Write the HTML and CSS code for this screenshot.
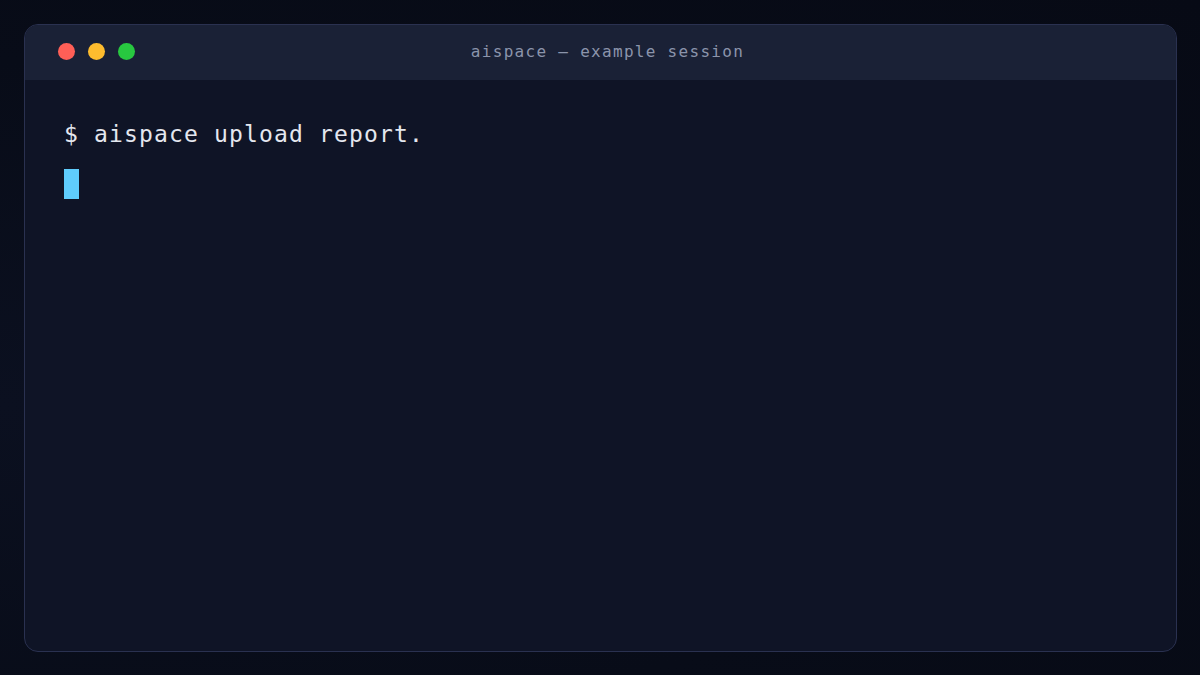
FILE: index.html
```html
<!DOCTYPE html>
<html lang="en">
<head>
<meta charset="utf-8">
<title>aispace — example session</title>
<link rel="stylesheet" href="styles.css">
</head>
<body>
<div class="window">
  <div class="titlebar">
    <div class="dots">
      <span class="dot red"></span>
      <span class="dot yellow"></span>
      <span class="dot green"></span>
    </div>
    <div class="title">aispace — example session</div>
  </div>
  <div class="terminal">
    <div class="line">$ aispace upload report.</div>
    <div class="cursor-line"><span class="cursor"></span></div>
  </div>
</div>
</body>
</html>
```
FILE: styles.css
```css
* { box-sizing: border-box; }
html, body {
  margin: 0;
  padding: 0;
  width: 1200px;
  height: 675px;
  overflow: hidden;
}
body {
  background: radial-gradient(ellipse at 0% 60%, #0b1020 0%, #080c18 60%, #070a15 100%);
  padding: 24px 23px 23px 24px;
  font-family: "DejaVu Sans Mono", "Liberation Mono", monospace;
}
.window {
  width: 1153px;
  height: 628px;
  border: 1px solid #2a3150;
  border-radius: 14px;
  background: #0f1426;
  overflow: hidden;
  display: flex;
  flex-direction: column;
}
.titlebar {
  height: 55px;
  background: #1a2136;
  display: flex;
  align-items: center;
  position: relative;
  padding-left: 33px;
  padding-bottom: 2px;
  flex-shrink: 0;
}
.dots {
  display: flex;
  gap: 13px;
}
.dot {
  width: 17px;
  height: 17px;
  border-radius: 50%;
  display: block;
}
.red { background: #ff5f57; }
.yellow { background: #febc2e; }
.green { background: #28c840; }
.title {
  position: absolute;
  left: 0;
  right: 0;
  top: 0;
  bottom: 2px;
  display: flex;
  align-items: center;
  justify-content: center;
  padding-left: 14px;
  color: #8b94ab;
  font-size: 16px;
  letter-spacing: 1.3px;
}
.terminal {
  padding: 39px 0 0 39px;
  color: #e4e7ef;
}
.line {
  font-size: 23px;
  letter-spacing: 1.15px;
  line-height: 30px;
  height: 30px;
}
.cursor-line {
  margin-top: 20px;
  height: 30px;
}
.cursor {
  display: block;
  width: 15px;
  height: 30px;
  background: #5fcdfd;
}
```
